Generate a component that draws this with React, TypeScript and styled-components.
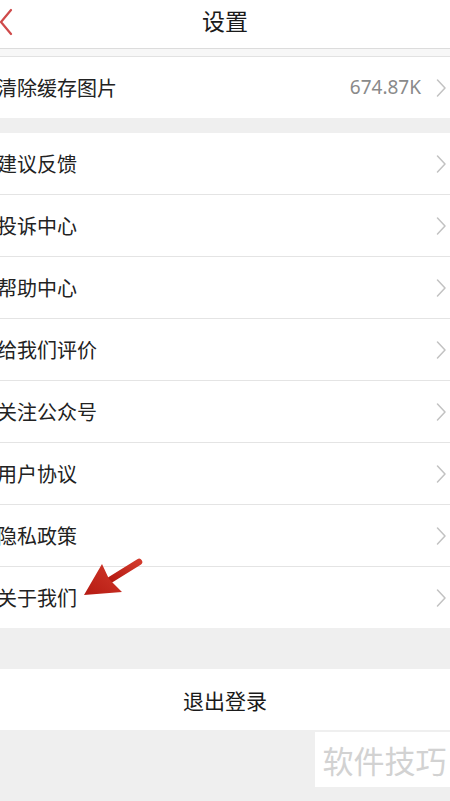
import React from "react";
import styled, { createGlobalStyle } from "styled-components";

const Global = createGlobalStyle`
  html, body { margin: 0; padding: 0; background: #efefef; }
  body { font-family: "Noto Sans CJK SC", "Noto Sans", sans-serif; color: #222; }
  * { box-sizing: border-box; }
`;

const Page = styled.div`
  width: 450px;
  height: 801px;
  background: #efefef;
  display: flex;
  flex-direction: column;
  position: relative;
  overflow: hidden;
`;

const Header = styled.div`
  height: 49px;
  background: #fff;
  display: flex;
  align-items: center;
  justify-content: center;
  position: relative;
  border-bottom: 1px solid #dcdcdc;
`;

const BackIcon = styled.svg`
  position: absolute;
  left: -2px;
  top: 8px;
`;

const Title = styled.div`
  font-size: 23px;
  line-height: 1;
  margin-top: -7px;
  color: #1a1a1a;
`;

const Strip = styled.div`
  height: 8px;
  background: #f7f7f7;
  border-bottom: 1px solid #e2e2e2;
`;

const Gap = styled.div<{ $h: number }>`
  height: ${(p) => p.$h}px;
  background: #efefef;
`;

const Group = styled.div`
  background: #fff;
  display: flex;
  flex-direction: column;
`;

const Row = styled.div<{ $line?: boolean }>`
  height: ${(p) => (p.$line ? 62 : 61)}px;
  display: flex;
  align-items: center;
  border-bottom: ${(p) => (p.$line ? "1px solid #e4e4e4" : "none")};
  padding-right: 3px;
`;

const Label = styled.div`
  font-size: 20px;
  margin-left: -3px;
  flex: 1;
  line-height: 1;
  color: #222;
`;

const Value = styled.div`
  font-family: "Noto Sans", sans-serif;
  font-size: 19px;
  color: #8a8a8a;
  margin-right: 14px;
  line-height: 1;
`;

const Logout = styled.div`
  height: 61px;
  background: #fff;
  display: flex;
  align-items: center;
  justify-content: center;
  font-size: 21px;
  color: #1a1a1a;
`;

const Bottom = styled.div`
  flex: 1;
  background: #efefef;
  display: flex;
  justify-content: flex-end;
  align-items: flex-start;
  padding-top: 2px;
`;

const Watermark = styled.div`
  width: 135px;
  height: 55px;
  background: #fff;
  display: flex;
  align-items: center;
  justify-content: center;
  font-size: 31px;
  color: #d2d2d2;
  padding-left: 4px;
`;

const Arrow = styled.svg`
  position: absolute;
  left: 80px;
  top: 556px;
`;

const Chevron = () => (
  <svg width="12" height="20" viewBox="0 0 12 20">
    <path d="M2.5 2 L10 10 L2.5 18" fill="none" stroke="#c2c2c2" strokeWidth="1.5" strokeLinecap="round" strokeLinejoin="round" />
  </svg>
);

const items = ["建议反馈", "投诉中心", "帮助中心", "给我们评价", "关注公众号", "用户协议", "隐私政策", "关于我们"];

export default function App() {
  return (
    <Page>
      <Global />
      <Header>
        <BackIcon width="16" height="28" viewBox="0 0 16 28">
          <path d="M13 2 L3 14 L13 26" fill="none" stroke="#cf4a4a" strokeWidth="2.2" strokeLinecap="round" strokeLinejoin="round" />
        </BackIcon>
        <Title>设置</Title>
      </Header>
      <Strip />
      <Group>
        <Row>
          <Label>清除缓存图片</Label>
          <Value>674.87K</Value>
          <Chevron />
        </Row>
      </Group>
      <Gap $h={15} />
      <Group>
        {items.map((t, i) => (
          <Row key={t} $line={i < items.length - 1}>
            <Label>{t}</Label>
            <Chevron />
          </Row>
        ))}
      </Group>
      <Gap $h={41} />
      <Logout>退出登录</Logout>
      <Bottom>
        <Watermark>软件技巧</Watermark>
      </Bottom>
      <Arrow width="70" height="50" viewBox="0 0 70 50">
        <defs>
          <linearGradient id="ag" x1="0" y1="1" x2="1" y2="0">
            <stop offset="0" stopColor="#b51a12" />
            <stop offset="1" stopColor="#d23a2c" />
          </linearGradient>
        </defs>
        <path d="M59 6 L30 24" stroke="url(#ag)" strokeWidth="6.5" strokeLinecap="round" />
        <path d="M4 39 L22 8 L29 23 L42 36 Z" fill="url(#ag)" />
      </Arrow>
    </Page>
  );
}
